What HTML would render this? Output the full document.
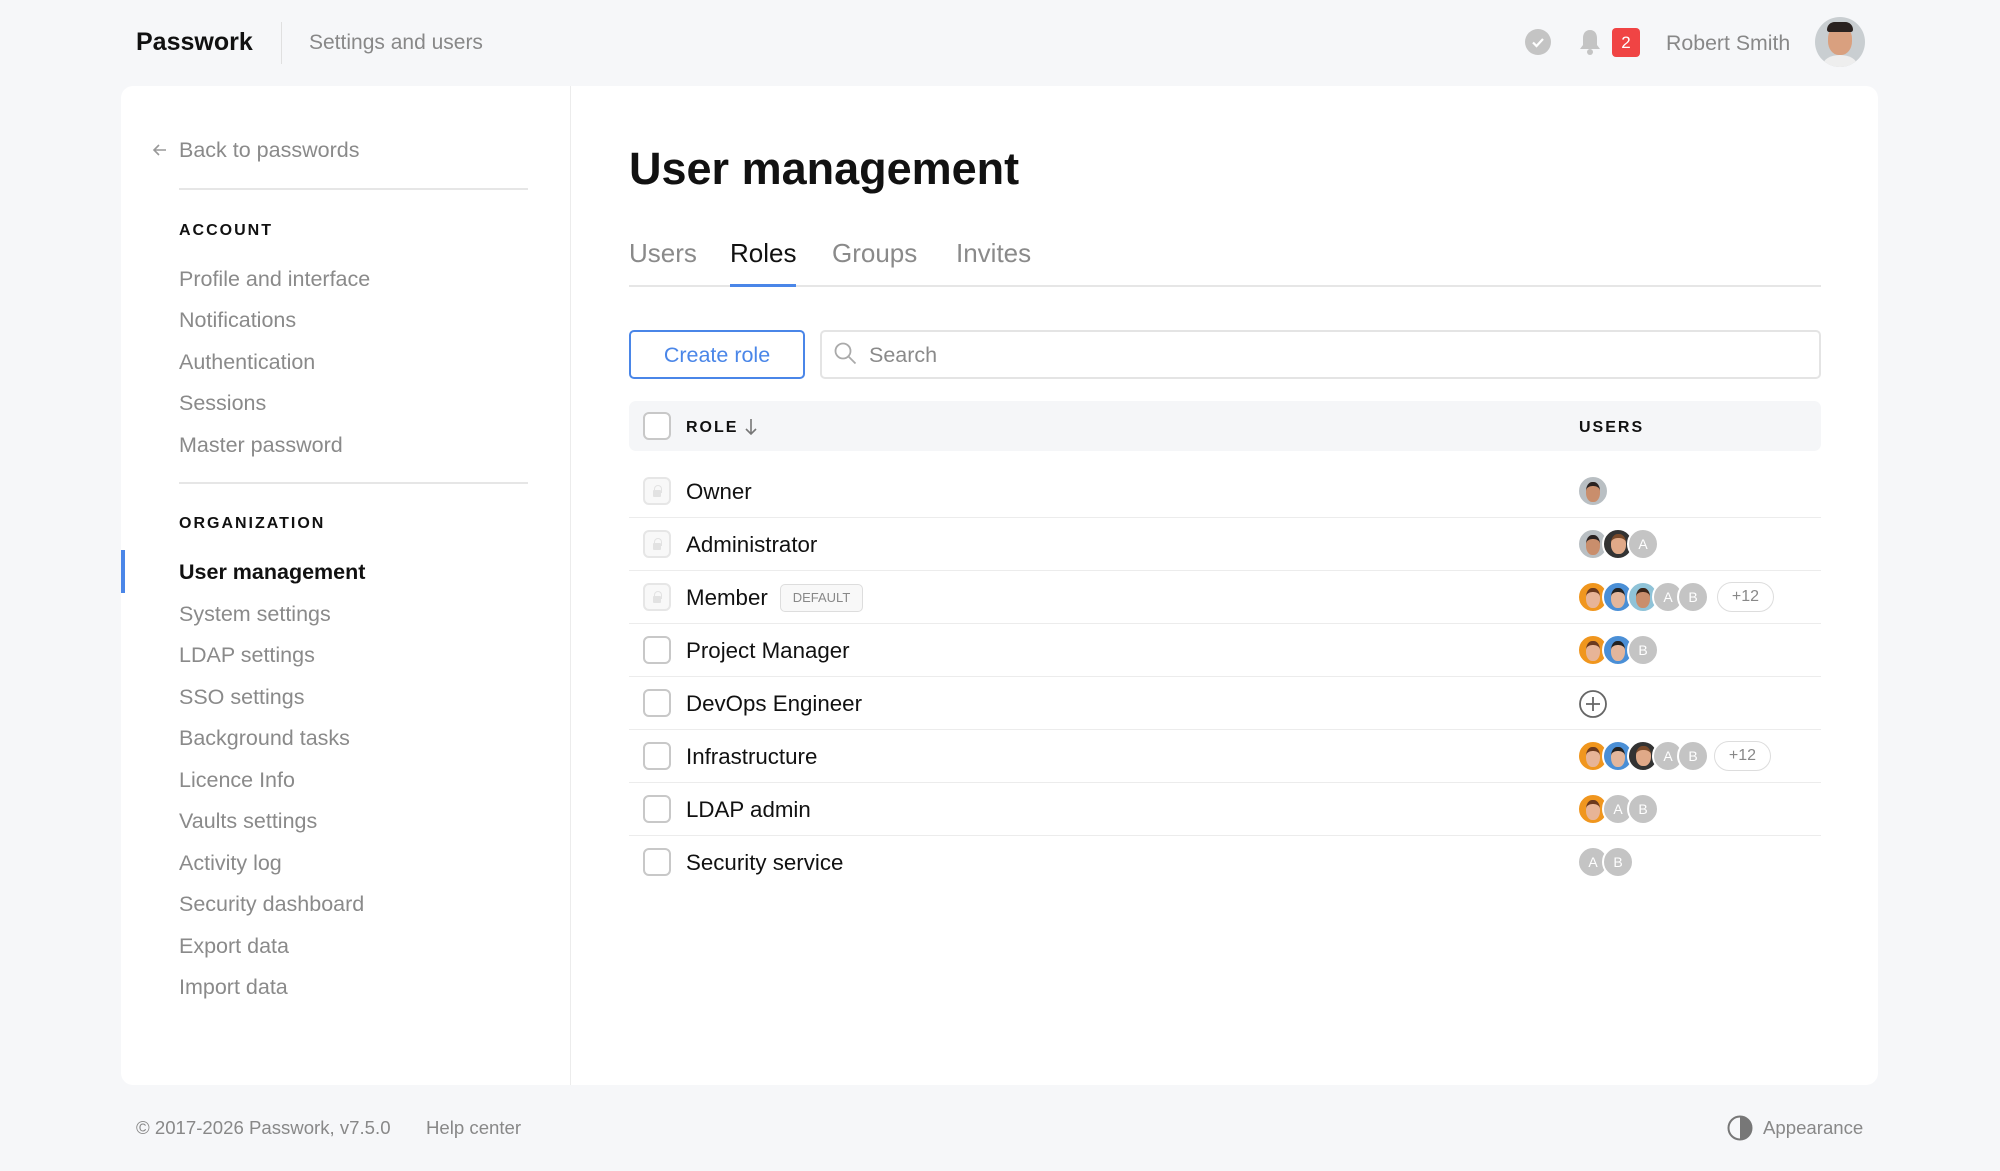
<!DOCTYPE html>
<html><head><meta charset="utf-8"><style>
*{margin:0;padding:0;box-sizing:border-box}
body{width:2000px;height:1171px;background:#f6f7f9;font-family:"Liberation Sans",sans-serif;position:relative;overflow:hidden;color:#111}
.a{position:absolute;white-space:nowrap}
.card{position:absolute;left:121px;top:86px;width:1757px;height:999px;background:#fff;border-radius:12px}
.side{color:#8a8a8a;font-size:21.5px}
.hd{font-size:16px;font-weight:bold;letter-spacing:2px;color:#111}
.cb{position:absolute;width:28px;height:28px;border:2px solid #c8c8c8;border-radius:6px;background:#fff}
.lk{position:absolute;width:28px;height:28px;border:2px solid #e6e6e6;border-radius:6px;background:#f8f8f8}
.lk::after{content:"";position:absolute;left:8px;top:11px;width:8px;height:7px;background:#e2e2e2;border-radius:1px}
.lk::before{content:"";position:absolute;left:9px;top:6px;width:6px;height:7px;border:1.5px solid #e2e2e2;border-bottom:none;border-radius:4px 4px 0 0}
.rn{position:absolute;left:686px;font-size:22.3px;color:#111}
.sep{position:absolute;left:629px;width:1192px;height:1px;background:#ececec}
.av{position:absolute;width:32px;height:32px;border-radius:50%;border:2px solid #fff;overflow:hidden}
.g{background:#c4c4c4;color:#fff;font-size:14px;text-align:center;line-height:28px}
.pill{position:absolute;height:30px;border:1.5px solid #ddd;border-radius:15px;color:#888;font-size:16px;text-align:center;line-height:27px;width:57px}
</style></head><body>
<div class="a" style="left:136px;top:28px;font-size:25px;font-weight:bold">Passwork</div>
<div class="a" style="left:281px;top:22px;width:1px;height:42px;background:#e0e0e0"></div>
<div class="a" style="left:309px;top:31px;font-size:21px;color:#888">Settings and users</div>
<svg class="a" style="left:1525px;top:29px" width="26" height="26"><circle cx="13" cy="13" r="13" fill="#c4c4c4"/><path d="M8 13.5l3.5 3.5 6.5-7" stroke="#fff" stroke-width="2.2" fill="none"/></svg>
<svg class="a" style="left:1577px;top:27px" width="26" height="30"><path d="M13 3c-5 0-7 4-7 8v7l-3 4h20l-3-4v-7c0-4-2-8-7-8z" fill="#c4c4c4"/><circle cx="13" cy="25" r="3" fill="#c4c4c4"/></svg>
<div class="a" style="left:1612px;top:28px;width:28px;height:29px;background:#f04444;border-radius:4px;color:#fff;font-size:17px;text-align:center;line-height:29px">2</div>
<div class="a" style="left:1666px;top:31px;font-size:21.3px;color:#888">Robert Smith</div>
<div class="a" style="left:1815px;top:17px;width:50px;height:50px;border-radius:50%;background:#c9ced1;overflow:hidden"><div style="position:absolute;left:13px;top:8px;width:24px;height:30px;border-radius:45%;background:#d9a07f"></div><div style="position:absolute;left:12px;top:5px;width:26px;height:10px;border-radius:10px 10px 3px 3px;background:#2a2220"></div><div style="position:absolute;left:8px;top:38px;width:34px;height:20px;border-radius:50%;background:#eee"></div></div>

<div class="card"></div>
<div class="a" style="left:570px;top:86px;width:1px;height:999px;background:#ececec"></div>
<svg class="a" style="left:151px;top:141px" width="18" height="18"><path d="M15 9H3M8 4L3 9l5 5" stroke="#999" stroke-width="1.6" fill="none"/></svg>
<div class="a side" style="left:179px;top:138px">Back to passwords</div>
<div class="a" style="left:179px;top:188px;width:349px;height:2px;background:#e6e6e6"></div>
<div class="a hd" style="left:179px;top:222px">ACCOUNT</div>
<div class="a side" style="left:179px;top:267px">Profile and interface</div>
<div class="a side" style="left:179px;top:308px">Notifications</div>
<div class="a side" style="left:179px;top:350px">Authentication</div>
<div class="a side" style="left:179px;top:391px">Sessions</div>
<div class="a side" style="left:179px;top:433px">Master password</div>
<div class="a" style="left:179px;top:482px;width:349px;height:2px;background:#e6e6e6"></div>
<div class="a hd" style="left:179px;top:515px">ORGANIZATION</div>
<div class="a" style="left:121px;top:550px;width:4px;height:43px;background:#4a86e8"></div>
<div class="a" style="left:179px;top:560px;font-size:21.5px;font-weight:bold;color:#111">User management</div>
<div class="a side" style="left:179px;top:602px">System settings</div>
<div class="a side" style="left:179px;top:643px">LDAP settings</div>
<div class="a side" style="left:179px;top:685px">SSO settings</div>
<div class="a side" style="left:179px;top:726px">Background tasks</div>
<div class="a side" style="left:179px;top:768px">Licence Info</div>
<div class="a side" style="left:179px;top:809px">Vaults settings</div>
<div class="a side" style="left:179px;top:851px">Activity log</div>
<div class="a side" style="left:179px;top:892px">Security dashboard</div>
<div class="a side" style="left:179px;top:934px">Export data</div>
<div class="a side" style="left:179px;top:975px">Import data</div>

<div class="a" style="left:629px;top:143px;font-size:45px;font-weight:bold;color:#111">User management</div>
<div class="a" style="left:629px;top:238px;font-size:26px;color:#8a8a8a">Users</div>
<div class="a" style="left:730px;top:238px;font-size:26px;color:#111">Roles</div>
<div class="a" style="left:832px;top:238px;font-size:26px;color:#8a8a8a">Groups</div>
<div class="a" style="left:956px;top:238px;font-size:26px;color:#8a8a8a">Invites</div>
<div class="a" style="left:629px;top:285px;width:1192px;height:2px;background:#e6e6e6"></div>
<div class="a" style="left:730px;top:284px;width:66px;height:3px;background:#4a86e8"></div>

<div class="a" style="left:629px;top:330px;width:176px;height:49px;border:2px solid #4a86e8;border-radius:5px;color:#4a86e8;font-size:21.5px;text-align:center;line-height:46px">Create role</div>
<div class="a" style="left:820px;top:330px;width:1001px;height:49px;border:2px solid #e4e4e4;border-radius:5px"></div>
<svg class="a" style="left:833px;top:341px" width="26" height="26"><circle cx="10" cy="10" r="7.5" stroke="#aaa" stroke-width="1.8" fill="none"/><path d="M15.5 15.5l7 7" stroke="#aaa" stroke-width="1.8"/></svg>
<div class="a" style="left:869px;top:343px;font-size:21.5px;color:#8a8a8a">Search</div>

<div class="a" style="left:629px;top:401px;width:1192px;height:50px;background:#f5f6f8;border-radius:7px"></div>
<div class="cb" style="left:643px;top:412px"></div>
<div class="a" style="left:686px;top:419px;font-size:16px;font-weight:bold;letter-spacing:2px">ROLE</div>
<svg class="a" style="left:743px;top:417px" width="16" height="20"><path d="M8 2v15M3 12l5 5 5-5" stroke="#777" stroke-width="1.6" fill="none"/></svg>
<div class="a" style="left:1579px;top:419px;font-size:16px;font-weight:bold;letter-spacing:2px">USERS</div>

<div class="lk" style="left:643px;top:477px"></div><div class="rn" style="top:479px">Owner</div><div class="sep" style="top:517px"></div>
<div class="lk" style="left:643px;top:530px"></div><div class="rn" style="top:532px">Administrator</div><div class="sep" style="top:570px"></div>
<div class="lk" style="left:643px;top:583px"></div><div class="rn" style="top:585px">Member</div>
<div class="a" style="left:780px;top:584px;width:83px;height:28px;border:1.5px solid #ddd;border-radius:5px;background:#f8f8f8;color:#888;font-size:13px;text-align:center;line-height:25px">DEFAULT</div>
<div class="sep" style="top:623px"></div>
<div class="cb" style="left:643px;top:636px"></div><div class="rn" style="top:638px">Project Manager</div><div class="sep" style="top:676px"></div>
<div class="cb" style="left:643px;top:689px"></div><div class="rn" style="top:691px">DevOps Engineer</div><div class="sep" style="top:729px"></div>
<div class="cb" style="left:643px;top:742px"></div><div class="rn" style="top:744px">Infrastructure</div><div class="sep" style="top:782px"></div>
<div class="cb" style="left:643px;top:795px"></div><div class="rn" style="top:797px">LDAP admin</div><div class="sep" style="top:835px"></div>
<div class="cb" style="left:643px;top:848px"></div><div class="rn" style="top:850px">Security service</div>

<div class="av" style="left:1577px;top:475px;background:#b9bfc3"><div style="margin:5px auto 0;width:14px;height:20px;border-radius:45%;background:#c98e6c;border-top:4px solid #2a2220"></div></div>

<div class="av" style="left:1577px;top:528px;background:#b9bfc3"><div style="margin:5px auto 0;width:14px;height:20px;border-radius:45%;background:#c98e6c;border-top:4px solid #2a2220"></div></div>
<div class="av" style="left:1602px;top:528px;background:#333"><div style="margin:4px auto 0;width:15px;height:20px;border-radius:45%;background:#e0a988;border-top:4px solid #7a4a2a"></div></div>
<div class="av g" style="left:1627px;top:528px">A</div>

<div class="av" style="left:1577px;top:581px;background:#f0961e"><div style="margin:5px auto 0;width:14px;height:20px;border-radius:45%;background:#e7b497;border-top:4px solid #6b3a1f"></div></div>
<div class="av" style="left:1602px;top:581px;background:#4a8fd6"><div style="margin:5px auto 0;width:14px;height:20px;border-radius:45%;background:#e3b69c;border-top:4px solid #222"></div></div>
<div class="av" style="left:1627px;top:581px;background:#8fc3d8"><div style="margin:5px auto 0;width:14px;height:20px;border-radius:45%;background:#c98e6c;border-top:4px solid #3a2418"></div></div>
<div class="av g" style="left:1652px;top:581px">A</div>
<div class="av g" style="left:1677px;top:581px">B</div>
<div class="pill" style="left:1717px;top:582px">+12</div>

<div class="av" style="left:1577px;top:634px;background:#f0961e"><div style="margin:5px auto 0;width:14px;height:20px;border-radius:45%;background:#e7b497;border-top:4px solid #6b3a1f"></div></div>
<div class="av" style="left:1602px;top:634px;background:#4a8fd6"><div style="margin:5px auto 0;width:14px;height:20px;border-radius:45%;background:#e3b69c;border-top:4px solid #222"></div></div>
<div class="av g" style="left:1627px;top:634px">B</div>

<svg class="a" style="left:1578px;top:689px" width="30" height="30"><circle cx="15" cy="15" r="13" stroke="#666" stroke-width="1.8" fill="none"/><path d="M15 8v14M8 15h14" stroke="#666" stroke-width="1.8"/></svg>

<div class="av" style="left:1577px;top:740px;background:#f0961e"><div style="margin:5px auto 0;width:14px;height:20px;border-radius:45%;background:#e7b497;border-top:4px solid #6b3a1f"></div></div>
<div class="av" style="left:1602px;top:740px;background:#4a8fd6"><div style="margin:5px auto 0;width:14px;height:20px;border-radius:45%;background:#e3b69c;border-top:4px solid #222"></div></div>
<div class="av" style="left:1627px;top:740px;background:#333"><div style="margin:4px auto 0;width:15px;height:20px;border-radius:45%;background:#e0a988;border-top:4px solid #7a4a2a"></div></div>
<div class="av g" style="left:1652px;top:740px">A</div>
<div class="av g" style="left:1677px;top:740px">B</div>
<div class="pill" style="left:1714px;top:741px">+12</div>

<div class="av" style="left:1577px;top:793px;background:#f0961e"><div style="margin:5px auto 0;width:14px;height:20px;border-radius:45%;background:#e7b497;border-top:4px solid #6b3a1f"></div></div>
<div class="av g" style="left:1602px;top:793px">A</div>
<div class="av g" style="left:1627px;top:793px">B</div>

<div class="av g" style="left:1577px;top:846px">A</div>
<div class="av g" style="left:1602px;top:846px">B</div>

<div class="a" style="left:136px;top:1117px;font-size:18.6px;color:#888">© 2017-2026 Passwork, v7.5.0</div>
<div class="a" style="left:426px;top:1117px;font-size:18.6px;color:#888">Help center</div>
<svg class="a" style="left:1727px;top:1115px" width="26" height="26"><circle cx="13" cy="13" r="11.5" stroke="#777" stroke-width="2" fill="none"/><path d="M13 1.5a11.5 11.5 0 0 1 0 23z" fill="#777"/></svg>
<div class="a" style="left:1763px;top:1117px;font-size:18.6px;color:#888">Appearance</div>
</body></html>
